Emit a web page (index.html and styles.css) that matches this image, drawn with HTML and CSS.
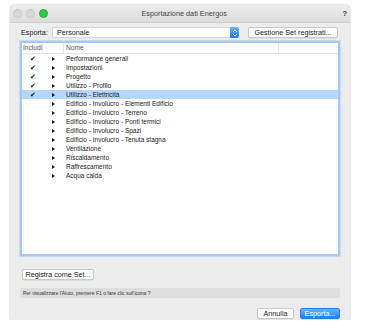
FILE: index.html
```html
<!DOCTYPE html>
<html lang="it">
<head>
    <meta charset="UTF-8">
    <title>Esportazione dati Energos</title>
    <link rel="stylesheet" href="styles.css">
</head>
<body>
    <div class="window">
        <div class="titlebar">
            <div class="lights">
                <span class="light"></span>
                <span class="light"></span>
                <span class="light green"></span>
            </div>
            <div class="title">Esportazione dati Energos</div>
            <div class="help">?</div>
        </div>

        <div class="content">
            <div class="export-row">
                <span class="label">Esporta:</span>
                <div class="popup">
                    <span>Personale</span>
                    <span class="popup-arrows">
                        <svg width="6" height="8" viewBox="0 0 6 8"><path d="M1 3 L3 1 L5 3 M1 5 L3 7 L5 5" fill="none" stroke="#fff" stroke-width="1"/></svg>
                    </span>
                </div>
                <button class="btn btn-manage">Gestione Set registrati...</button>
            </div>

            <div class="list">
                <div class="list-head">
                    <div class="col-inc">Includi</div>
                    <div class="col-arrow"></div>
                    <div class="col-name">Nome</div>
                    <div class="col-rest"></div>
                </div>
                <div class="rows">
                    <div class="row"><span class="col-inc check">✔</span><span class="col-arrow"><i class="tri"></i></span><span class="col-name">Performance generali</span></div>
                    <div class="row"><span class="col-inc check">✔</span><span class="col-arrow"><i class="tri"></i></span><span class="col-name">Impostazioni</span></div>
                    <div class="row"><span class="col-inc check">✔</span><span class="col-arrow"><i class="tri"></i></span><span class="col-name">Progetto</span></div>
                    <div class="row"><span class="col-inc check">✔</span><span class="col-arrow"><i class="tri"></i></span><span class="col-name">Utilizzo - Profilo</span></div>
                    <div class="row selected"><span class="col-inc check">✔</span><span class="col-arrow"><i class="tri"></i></span><span class="col-name">Utilizzo - Elettricità</span></div>
                    <div class="row"><span class="col-inc check"></span><span class="col-arrow"><i class="tri"></i></span><span class="col-name">Edificio - Involucro - Elementi Edificio</span></div>
                    <div class="row"><span class="col-inc check"></span><span class="col-arrow"><i class="tri"></i></span><span class="col-name">Edificio - Involucro - Terreno</span></div>
                    <div class="row"><span class="col-inc check"></span><span class="col-arrow"><i class="tri"></i></span><span class="col-name">Edificio - Involucro - Ponti termici</span></div>
                    <div class="row"><span class="col-inc check"></span><span class="col-arrow"><i class="tri"></i></span><span class="col-name">Edificio - Involucro - Spazi</span></div>
                    <div class="row"><span class="col-inc check"></span><span class="col-arrow"><i class="tri"></i></span><span class="col-name">Edificio - Involucro - Tenuta stagna</span></div>
                    <div class="row"><span class="col-inc check"></span><span class="col-arrow"><i class="tri"></i></span><span class="col-name">Ventilazione</span></div>
                    <div class="row"><span class="col-inc check"></span><span class="col-arrow"><i class="tri"></i></span><span class="col-name">Riscaldamento</span></div>
                    <div class="row"><span class="col-inc check"></span><span class="col-arrow"><i class="tri"></i></span><span class="col-name">Raffrescamento</span></div>
                    <div class="row"><span class="col-inc check"></span><span class="col-arrow"><i class="tri"></i></span><span class="col-name">Acqua calda</span></div>
                </div>
            </div>

            <div class="save-row">
                <button class="btn">Registra come Set...</button>
            </div>

            <div class="helpbar">Per visualizzare l'Aiuto, premere F1 o fare clic sull'icona ?</div>

            <div class="actions">
                <button class="btn">Annulla</button>
                <button class="btn btn-primary">Esporta...</button>
            </div>
        </div>
    </div>
</body>
</html>
```

FILE: styles.css
```css
body {
    margin: 0;
    background: #fff;
    font-family: "Liberation Sans", Arial, sans-serif;
    color: #222;
}
.window {
    margin: 5px 0 0 10px;
    width: 340px;
    height: 315px;
    background: #ececec;
    border-radius: 5px 5px 2px 2px;
    box-shadow: 0 0 2px rgba(0, 0, 0, 0.35);
    display: flex;
    flex-direction: column;
}
.titlebar {
    height: 17px;
    border-bottom: 1px solid #d0d0d0;
    background: linear-gradient(#ebebeb, #dcdcdc);
    border-radius: 5px 5px 0 0;
    display: flex;
    align-items: center;
}
.lights {
    display: flex;
    gap: 4px;
    padding-left: 3px;
}
.light {
    width: 7px;
    height: 7px;
    border-radius: 50%;
    background: #d8d8d8;
    border: 0.5px solid #c6c6c6;
}
.light.green {
    background: #34c84a;
    border-color: #2aa83c;
}
.title {
    flex: 1;
    text-align: center;
    font-size: 7.3px;
    color: #444;
    margin-left: -22px;
}
.help {
    font-size: 7.5px;
    font-weight: bold;
    color: #333;
    padding-right: 3px;
}
.content {
    flex: 1;
    padding: 4px 10px 0 10px;
    display: flex;
    flex-direction: column;
}
.export-row {
    display: flex;
    align-items: center;
    height: 11px;
}
.label {
    font-size: 7.2px;
    margin-left: 1px;
    width: 31px;
}
.popup {
    width: 187px;
    height: 11px;
    box-sizing: border-box;
    background: #fff;
    border: 1px solid #d4d4d4;
    border-radius: 2px;
    font-size: 7.2px;
    display: flex;
    align-items: center;
    justify-content: space-between;
    padding-left: 4px;
}
.popup-arrows {
    width: 9px;
    height: 11px;
    margin-right: -1px;
    background: linear-gradient(#6cb3fa, #1f7ff3);
    border-radius: 0 2px 2px 0;
    display: flex;
    align-items: center;
    justify-content: center;
}
.btn {
    font-family: "Liberation Sans", Arial, sans-serif;
    font-size: 7.2px;
    color: #222;
    background: #fff;
    border: 1px solid #c8c8c8;
    border-radius: 2px;
    height: 11px;
    padding: 0 5px;
    line-height: 9px;
    box-shadow: 0 0.5px 0 rgba(0, 0, 0, 0.1);
}
.btn-manage {
    margin-left: 9px;
    width: 90px;
}
.btn-primary {
    background: linear-gradient(#6cb1fb, #1a82f7);
    border-color: #2a7fe8;
    color: #fff;
}
.list {
    margin-top: 3px;
    height: 215px;
    box-sizing: border-box;
    background: #fff;
    border: 2px solid #a5c8f4;
    outline: 1px solid #c6dcf7;
    display: flex;
    flex-direction: column;
}
.list-head {
    height: 10px;
    border-bottom: 1px solid #e2e2e2;
    display: flex;
    font-size: 6.6px;
    color: #555;
    line-height: 10px;
}
.list-head .col-inc,
.list-head .col-arrow {
    border-right: 1px solid #e6e6e6;
}
.list-head .col-name {
    flex: 0 0 212px;
    border-right: 1px solid #e6e6e6;
}
.col-inc {
    flex: 0 0 21px;
    box-sizing: border-box;
    padding-left: 1px;
}
.col-arrow {
    flex: 0 0 21px;
    box-sizing: border-box;
    display: flex;
    align-items: center;
    padding-left: 9px;
}
.col-name {
    padding-left: 2px;
}
.rows {
    display: flex;
    flex-direction: column;
}
.row {
    display: flex;
    height: 9px;
    line-height: 9px;
    font-size: 6.5px;
    color: #1a1a1a;
}
.row.selected {
    background: #b3d7ff;
}
.check {
    text-align: center;
    padding-left: 0;
    font-size: 7px;
    color: #111;
}
.tri {
    width: 0;
    height: 0;
    border-top: 2.5px solid transparent;
    border-bottom: 2.5px solid transparent;
    border-left: 3px solid #111;
}
.row .col-name {
    padding-left: 2px;
}
.save-row {
    margin-top: 7px;
}
.save-row .btn {
    margin-left: 2px;
    width: 72px;
    padding: 0;
}
.helpbar {
    margin-top: 7px;
    height: 10px;
    background: #dedede;
    border-radius: 2px;
    font-size: 5px;
    line-height: 10px;
    padding-left: 3px;
    color: #333;
}
.actions {
    margin-top: 10px;
    display: flex;
    justify-content: flex-end;
    gap: 6px;
}
.actions .btn {
    padding: 0;
    width: 37px;
}
.actions .btn-primary {
    width: 40px;
}
```
